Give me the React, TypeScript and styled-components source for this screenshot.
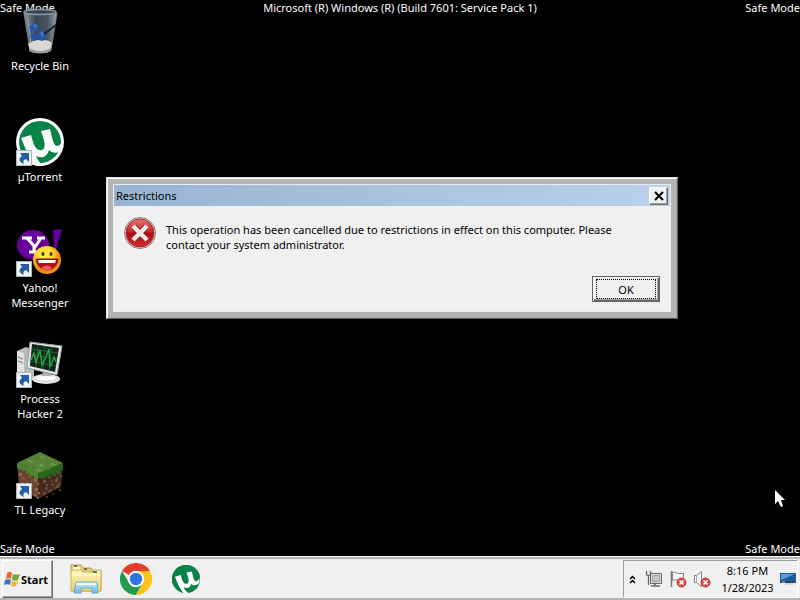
import React from 'react';
import styled, { createGlobalStyle } from 'styled-components';

const GlobalStyle = createGlobalStyle`
  *, *::before, *::after { box-sizing: border-box; }
  body {
    margin: 0;
    background: #000;
    color: #000;
    font-family: "Noto Sans", "Open Sans", sans-serif;
    font-size: 11px;
    line-height: 15px;
  }
  button { font: inherit; color: inherit; padding: 0; margin: 0; }
  svg { display: block; flex: none; }
`;

const Screen = styled.div`
  min-height: 100vh;
  display: grid;
  grid-template-rows: 1fr auto;
  overflow: hidden;
`;

const Desktop = styled.main`
  position: relative;
  background: #000;
  color: #fff;
`;

const Watermark = styled.span<{ $v: 'top' | 'bottom'; $h: 'left' | 'center' | 'right' }>`
  position: absolute;
  ${p => p.$v}: 0;
  ${p => (p.$h === 'center' ? 'left: 0; right: 0; text-align: center;' : `${p.$h}: 0;`)}
  white-space: nowrap;
  pointer-events: none;
`;

const Shortcuts = styled.nav`
  width: 80px;
  padding-top: 7px;
  display: grid;
  grid-auto-rows: 81px;
  gap: 30px;
`;

const Shortcut = styled.a`
  display: flex;
  flex-direction: column;
  align-items: center;
  gap: 3px;
  color: inherit;
  text-align: center;
  text-decoration: none;
`;

const ShortcutIcon = styled.span`
  position: relative;
`;

const ArrowBadge = styled.span`
  position: absolute;
  left: 0;
  bottom: 0;
`;

const ShortcutLabel = styled.span`
  width: 66px;
`;

const Dialog = styled.section`
  position: absolute;
  left: 106px;
  top: 177px;
  width: 572px;
  padding: 5px;
  color: #000;
  background: #b4b4b4;
  border: 1px solid;
  border-color: #e3e3e3 #696969 #696969 #e3e3e3;
  box-shadow: inset 1px 1px #fff, inset -1px -1px #a0a0a0;
`;

const DialogInner = styled.div`
  background: #f0f0f0;
  border: 1px solid #e8eaec;
  margin: 1px;
`;

const TitleBar = styled.header`
  display: flex;
  align-items: center;
  justify-content: space-between;
  height: 21px;
  padding: 0 2px;
  background: linear-gradient(90deg, #99b4d1, #b9d1ea);
`;

const Title = styled.h1`
  margin: 0;
  font-size: 11px;
  font-weight: 400;
`;

const CloseButton = styled.button`
  display: grid;
  place-items: center;
  width: 19px;
  height: 18px;
  background: #f0f0f0;
  border: 1px solid;
  border-color: #fff #696969 #696969 #fff;
  box-shadow: inset -1px -1px #a0a0a0;
`;

const DialogBody = styled.div`
  padding: 11px 10px 9px;
`;

const Message = styled.div`
  display: flex;
  gap: 10px;
`;

const MessageText = styled.p`
  margin: 0;
  padding: 5px 32px 0 0;
`;

const Actions = styled.footer`
  display: flex;
  justify-content: flex-end;
  padding-top: 24px;
`;

const OkButton = styled.button`
  width: 68px;
  height: 26px;
  padding: 2px;
  background: #f0f0f0;
  border: 1px solid #646464;
  box-shadow: inset 1px 1px #fff, inset -1px -1px #696969, inset -2px -2px #a0a0a0;
`;

const FocusRing = styled.span`
  display: grid;
  place-items: center;
  height: 20px;
  margin: 0 1px;
  border: 1px dotted #000;
`;

const Pointer = styled.div`
  position: absolute;
  left: 774px;
  top: 489px;
`;

const Taskbar = styled.footer`
  display: flex;
  align-items: stretch;
  height: 44px;
  padding: 1px 2px 0;
  background: #f0f0f0;
  border-top: 1px solid #fff;
  border-bottom: 2px solid #b4b4b4;
  box-shadow: inset 0 2px #b4b4b4;
`;

const StartButton = styled.button`
  display: flex;
  align-items: center;
  gap: 1px;
  width: 51px;
  margin-top: 2px;
  padding-left: 1px;
  background: #f0f0f0;
  border: 1px solid;
  border-color: #fff #696969 #696969 #fff;
  box-shadow: inset -1px -1px #a0a0a0;
  font-weight: 700;
`;

const Pinned = styled.div`
  display: flex;
  flex: 1;
  padding: 2px 0 0 8px;
`;

const PinnedButton = styled.button`
  display: grid;
  place-items: center;
  width: 50px;
  background: none;
  border: 0;
`;

const Tray = styled.div`
  display: flex;
  align-items: center;
  width: 175px;
  margin-top: 2px;
  padding-left: 4px;
  border: 1px solid;
  border-color: #a0a0a0 #fff #fff #a0a0a0;
`;

const TrayButton = styled.button`
  display: grid;
  place-items: center;
  width: 24px;
  height: 24px;
  background: none;
  border: 0;
`;

const ChevronButton = styled(TrayButton)`
  width: 9px;
  margin-right: 5px;
`;

const ShowDesktopButton = styled(TrayButton)`
  width: 18px;
`;

const Clock = styled.time`
  flex: 1;
  padding-left: 2px;
  text-align: center;
  line-height: 17px;
`;

const MU_PATH = 'M5 20 L15 17 C17 24 19 34 26 32 C31 30 28 22 25 13 L34 11 C36 18 37 29 42 28 C44 27 46 25 47 22 L47 30 C43 36 37 36 33 32 C31 39 26 41 20 38 C22 43 25 46 28 48 L20 48 C13 41 9 29 5 20 Z';

function ShortcutArrow() {
  return (
    <svg width="16" height="16" viewBox="0 0 16 16" aria-hidden="true">
      <rect x=".5" y=".5" width="15" height="15" fill="#f1f2f4" stroke="#aeb4ba" />
      <path d="M4 3h9v9l-3-3c-3 1-3 3-2 5C3 12 2 9 6 6Z" fill="#235da5" />
    </svg>
  );
}

function RecycleBinIcon() {
  return (
    <svg width="48" height="48" viewBox="0 0 48 48" aria-hidden="true">
      <defs>
        <linearGradient id="binGlass"><stop stopColor="#8c9aa4" /><stop offset=".35" stopColor="#394854" /><stop offset=".7" stopColor="#46535e" /><stop offset="1" stopColor="#97a4ad" /></linearGradient>
      </defs>
      <path d="M8 6h33l-6 37c-4 4-17 4-21 0Z" fill="url(#binGlass)" stroke="#75838c" />
      <path d="M12 37c5-5 19-6 24-1l-2 7c-4 4-16 4-20 0Z" fill="#d7d8d5" />
      <path d="M13 41c7 4 15 4 22 0v3c-5 3-17 3-22 0Z" fill="#9c9e9d" />
      <path d="M13 20l5-4 5 3-1 5-4-1-3 3Zm0 9 5-3 4 4-4 4Zm8-2 5-4 4 5-3 6-5-1Z" fill="#2456a8" />
      <path d="M17 17l4 1-2 4Zm7 8 4 1-2 4Z" fill="#4a7bc8" />
      <path d="m40 18-12 9" stroke="#16212b" strokeWidth="2" />
      <ellipse cx="24" cy="5" rx="16" ry="2.500" fill="#39444e" stroke="#8497a6" strokeWidth="1.500" />
      <path d="M12 11l3 26" stroke="#b0bdc5" opacity=".5" />
    </svg>
  );
}

function TorrentIcon({ size, ring }: { size: number; ring?: boolean }) {
  return (
    <svg width={size} height={size} viewBox="0 0 48 48" aria-hidden="true">
      <circle cx="24" cy="24" r="24" fill={ring ? '#fff' : '#087e49'} />
      <circle cx="24" cy="24" r={ring ? 21 : 24} fill="#088347" />
      <path d={MU_PATH} fill="#fff" />
    </svg>
  );
}

function MessengerIcon() {
  return (
    <svg width="48" height="48" viewBox="0 0 48 48" aria-hidden="true">
      <defs>
        <radialGradient id="smileFace" cx=".4" cy=".3"><stop stopColor="#fff25a" /><stop offset=".65" stopColor="#ffd526" /><stop offset="1" stopColor="#ef8d15" /></radialGradient>
      </defs>
      <ellipse cx="17" cy="16" rx="16" ry="15" fill="#68009b" />
      <path d="m37 1 9-1-6 20h-2Z" fill="#65009a" />
      <path d="M6 9h10M21 9h8M11 9l8 9 6-9M18 17v6M13 23h9" fill="none" stroke="#fff" strokeWidth="3" />
      <circle cx="31" cy="31" r="14" fill="url(#smileFace)" />
      <ellipse cx="27" cy="25" rx="1.500" ry="2" fill="#453009" />
      <ellipse cx="35" cy="25" rx="1.500" ry="2" fill="#453009" />
      <path d="M20 30h22c-1 14-20 15-22 0Z" fill="#b90f1c" stroke="#6c2010" />
      <path d="M22 31h18l-1 3H23Z" fill="#fff" />
      <path d="M25 39c4-3 8-3 11 0-3 3-8 3-11 0Z" fill="#ee5b5d" />
    </svg>
  );
}

function ProcessIcon() {
  return (
    <svg width="48" height="48" viewBox="0 0 48 48" aria-hidden="true">
      <path d="m1 11 9-4 8 3v28l-10 4-7-4Z" fill="#b8bbbb" />
      <path d="m1 11 7 2v29l-7-4Z" fill="#e1e3e3" />
      <path d="m2 17 5 2m-5 2 5 2" stroke="#777" />
      <ellipse cx="30" cy="39" rx="14" ry="5" fill="#e0e2e2" />
      <path d="m27 31 9 1-1 6H25Z" fill="#aeb1b2" />
      <path d="m14 2 32 4-5 29-30-7Z" fill="#e4e6e6" stroke="#9a9d9f" />
      <path d="m16 4 27 4-4 24-25-6Z" fill="#102519" />
      <path d="m16 9 26 4M15 15l26 4M14 21l26 5M22 5l-2 22M29 6l-2 23M36 7l-3 23" stroke="#235d34" />
      <path d="m15 20 3-7 2 9 4-12 2 15 4-8 3-8 1 18 4-10 2 5" fill="none" stroke="#27a343" strokeWidth="1.500" />
      <ellipse cx="30" cy="38" rx="10" ry="2" fill="#fff" />
    </svg>
  );
}

const GRASS = [[9, 13], [14, 9], [20, 6], [26, 5], [31, 10], [37, 12], [17, 15], [25, 13], [31, 16], [22, 18]];
const DIRT = [[3, 22], [7, 26], [12, 24], [18, 28], [5, 31], [15, 33], [19, 37], [11, 35], [18, 42], [27, 29], [32, 25], [37, 22], [41, 20], [29, 36], [35, 32], [39, 28], [27, 41], [33, 38], [40, 34]];

function BlockIcon() {
  return (
    <svg width="48" height="48" viewBox="0 0 48 48" aria-hidden="true">
      <path d="M1 12 22 22v26L3 36Z" fill="#674331" />
      <path d="m22 22 25-10-2 24-23 12Z" fill="#432b20" />
      {DIRT.map(([x, y], i) => (
        <path key={i} d={`M${x} ${y}h3v3h-3Zm3 4h2v2h-2Z`} fill={i % 3 ? '#81523a' : '#966545'} opacity={x > 24 ? '.6' : '1'} />
      ))}
      <path d="M24 1 47 12 22 23 1 12Z" fill="#568334" />
      <path d="m1 12 21 10v6l-4-1v-3l-4 1v-3l-4 1v-4l-4 1v-3l-3 2-2-3Z" fill="#4d872b" />
      <path d="m22 22 25-10v7l-4 1v3l-4-2v5l-5-3v4l-5-2v3l-7-1Z" fill="#28661f" />
      {GRASS.map(([x, y], i) => (
        <path key={i} d={`m${x} ${y} 4 2-3 1-4-2Z`} fill={i % 2 ? '#729451' : '#4c7c34'} />
      ))}
    </svg>
  );
}

function ErrorIcon() {
  return (
    <svg width="32" height="32" viewBox="0 0 32 32" role="img" aria-label="Error">
      <defs>
        <linearGradient id="errorRed" x2="0" y2="1"><stop stopColor="#df7770" /><stop offset=".45" stopColor="#c52a2e" /><stop offset=".5" stopColor="#ae0b14" /><stop offset="1" stopColor="#d32d31" /></linearGradient>
      </defs>
      <circle cx="16" cy="16" r="15.500" fill="#e8e6e6" stroke="#8e7775" />
      <circle cx="16" cy="16" r="14" fill="url(#errorRed)" stroke="#a32b2b" />
      <path d="m10 10 12 12m0-12L10 22" stroke="#85151a" strokeWidth="6" />
      <path d="m9 9 14 14m0-14L9 23" stroke="#f1e9e5" strokeWidth="4.500" />
    </svg>
  );
}

function WindowsFlag() {
  return (
    <svg width="16" height="16" viewBox="0 0 16 16" aria-hidden="true">
      <path d="M3 2c2-2 4-1 5 0L7 8C5 7 4 7 2 8Z" fill="#e66b32" />
      <path d="M9 3c2 1 4 1 7 0l-2 6c-2 1-4 1-6 0Z" fill="#71a83b" />
      <path d="M1 9c2-1 4-1 6 0l-1 5c-2-1-4-1-6 0Z" fill="#3477bd" />
      <path d="M8 10c2 1 4 1 6 0l-2 5c-2 1-4 1-5 0Z" fill="#efb72e" />
    </svg>
  );
}

function FolderIcon() {
  return (
    <svg width="32" height="32" viewBox="0 0 32 32" aria-hidden="true">
      <defs>
        <linearGradient id="folderYellow" x2="0" y2="1"><stop stopColor="#fff7bd" /><stop offset="1" stopColor="#ecd06f" /></linearGradient>
        <linearGradient id="trayBlue" x2="0" y2="1"><stop stopColor="#d1effa" /><stop offset="1" stopColor="#68b8dd" /></linearGradient>
      </defs>
      <path d="M1 2h10l2 3h8l2 3h8v20H2Z" fill="#e7cd79" stroke="#bb9b48" />
      <path d="M3 4h7v5h11v3h9v15H3Z" fill="#fff9dc" />
      <path d="M1 7h10l2 2h9l2-2h7v21H1Z" fill="url(#folderYellow)" stroke="#cbae58" />
      <path d="M4 3h3M14 6h3M23 9h4" stroke="#527b58" strokeWidth="2" />
      <path d="M2 12h28" stroke="#fffce1" />
      <path d="M6 19h21l1 11h-6v-5H11v5H4Z" fill="url(#trayBlue)" stroke="#67afd2" />
      <path d="M6 21h20" stroke="#edfaff" strokeWidth="2" />
    </svg>
  );
}

function ChromeIcon() {
  return (
    <svg width="32" height="32" viewBox="0 0 48 48" aria-hidden="true">
      <path d="M3.200 12A24 24 0 0 1 44.800 12H24A12 12 0 0 0 13.600 18Z" fill="#e33b2e" />
      <path d="M3.200 12 13.600 30A12 12 0 0 0 24 36L34.400 30 24 48A24 24 0 0 1 3.200 12Z" fill="#229d50" />
      <path d="M44.800 12A24 24 0 0 1 24 48L34.400 30A12 12 0 0 0 34.400 18L24 12Z" fill="#fdc51b" />
      <circle cx="24" cy="24" r="12" fill="#fff" />
      <circle cx="24" cy="24" r="9.300" fill="#2f76dc" />
    </svg>
  );
}

function ErrorMark() {
  return (
    <g>
      <circle cx="12.500" cy="12.500" r="4.500" fill="#d84a48" stroke="#c43a3c" />
      <path d="m10.500 10.500 4 4m0-4-4 4" stroke="#fff" strokeWidth="1.700" />
    </g>
  );
}

function NetworkIcon() {
  return (
    <svg width="18" height="18" viewBox="0 0 18 18" aria-hidden="true">
      <path d="M5.500 3.500h11v10h-11Z" fill="#ddd" stroke="#666" />
      <path d="M7.500 5.500h7v6h-7Z" fill="#c4c4c4" stroke="#a2a2a2" />
      <path d="M10 14v2m-4 0h9" stroke="#666" strokeWidth="1.500" />
      <path d="M1.500 1v3c0 2 4 2 4 0V1M3.500 6v9" fill="none" stroke="#666" strokeWidth="1.300" />
    </svg>
  );
}

function FlagIcon() {
  return (
    <svg width="18" height="18" viewBox="0 0 18 18" aria-hidden="true">
      <path d="M2.500 1v16" stroke="#777" strokeWidth="1.500" />
      <path d="M3.500 2.500c3-1 4 1 6 1h5v7c-4 1-6-2-11 0Z" fill="#f7f7f7" stroke="#858585" />
      <ErrorMark />
    </svg>
  );
}

function SpeakerIcon() {
  return (
    <svg width="18" height="18" viewBox="0 0 18 18" aria-hidden="true">
      <path d="M1.500 5.500h2l5-4v15l-5-4h-2Z" fill="#f6f6f6" stroke="#858585" />
      <path d="M3.500 6v6" stroke="#aaa" />
      <ErrorMark />
    </svg>
  );
}

function DesktopIcon() {
  return (
    <svg width="16" height="14" viewBox="0 0 16 14" aria-hidden="true">
      <path d="M0 1h16v10H0Z" fill="#1d5b9e" />
      <path d="M1 2h14L1 8Z" fill="#5e9dda" />
      <path d="M1 9h14v2H1Z" fill="#294460" />
      <path d="M2 10h3" stroke="#b2d3e8" />
      <path d="M5 12h9" stroke="#b8c3cd" />
    </svg>
  );
}

const shortcuts = [
  { label: 'Recycle Bin', icon: <RecycleBinIcon />, linked: false },
  { label: 'µTorrent', icon: <TorrentIcon size={48} ring />, linked: true },
  { label: 'Yahoo! Messenger', icon: <MessengerIcon />, linked: true },
  { label: 'Process Hacker 2', icon: <ProcessIcon />, linked: true },
  { label: 'TL Legacy', icon: <BlockIcon />, linked: true },
];

export default function App() {
  return (
    <Screen>
      <GlobalStyle />
      <Desktop>
        <Watermark $v="top" $h="left">Safe Mode</Watermark>
        <Watermark $v="top" $h="center">Microsoft (R) Windows (R) (Build 7601: Service Pack 1)</Watermark>
        <Watermark $v="top" $h="right">Safe Mode</Watermark>
        <Watermark $v="bottom" $h="left">Safe Mode</Watermark>
        <Watermark $v="bottom" $h="right">Safe Mode</Watermark>
        <Shortcuts aria-label="Desktop">
          {shortcuts.map(s => (
            <Shortcut key={s.label} href="#">
              <ShortcutIcon>
                {s.icon}
                {s.linked && <ArrowBadge><ShortcutArrow /></ArrowBadge>}
              </ShortcutIcon>
              <ShortcutLabel>{s.label}</ShortcutLabel>
            </Shortcut>
          ))}
        </Shortcuts>
        <Dialog role="alertdialog" aria-labelledby="dialog-title" aria-describedby="dialog-text">
          <DialogInner>
            <TitleBar>
              <Title id="dialog-title">Restrictions</Title>
              <CloseButton aria-label="Close">
                <svg width="10" height="10" viewBox="0 0 10 10" aria-hidden="true">
                  <path d="m1 1 8 8m0-8L1 9" stroke="#000" strokeWidth="2" />
                </svg>
              </CloseButton>
            </TitleBar>
            <DialogBody>
              <Message>
                <ErrorIcon />
                <MessageText id="dialog-text">
                  This operation has been cancelled due to restrictions in effect on this computer. Please contact your system administrator.
                </MessageText>
              </Message>
              <Actions>
                <OkButton><FocusRing>OK</FocusRing></OkButton>
              </Actions>
            </DialogBody>
          </DialogInner>
        </Dialog>
        <Pointer>
          <svg width="13" height="20" viewBox="0 0 13 20" aria-hidden="true">
            <path d="M1 1v14l3-3 3 6 2-1-2-6h4Z" fill="#fff" />
          </svg>
        </Pointer>
      </Desktop>
      <Taskbar>
        <StartButton><WindowsFlag />Start</StartButton>
        <Pinned>
          <PinnedButton aria-label="Windows Explorer"><FolderIcon /></PinnedButton>
          <PinnedButton aria-label="Google Chrome"><ChromeIcon /></PinnedButton>
          <PinnedButton aria-label="µTorrent"><TorrentIcon size={28} /></PinnedButton>
        </Pinned>
        <Tray>
          <ChevronButton aria-label="Show hidden icons">
            <svg width="7" height="9" viewBox="0 0 7 9" aria-hidden="true">
              <path d="m1 4 2.500-2.500L6 4M1 8l2.500-2.500L6 8" fill="none" stroke="#000" strokeWidth="1.500" />
            </svg>
          </ChevronButton>
          <TrayButton aria-label="Network"><NetworkIcon /></TrayButton>
          <TrayButton aria-label="Action Center"><FlagIcon /></TrayButton>
          <TrayButton aria-label="Volume"><SpeakerIcon /></TrayButton>
          <Clock dateTime="2023-01-28T20:16">8:16 PM<br />1/28/2023</Clock>
          <ShowDesktopButton aria-label="Show desktop"><DesktopIcon /></ShowDesktopButton>
        </Tray>
      </Taskbar>
    </Screen>
  );
}
